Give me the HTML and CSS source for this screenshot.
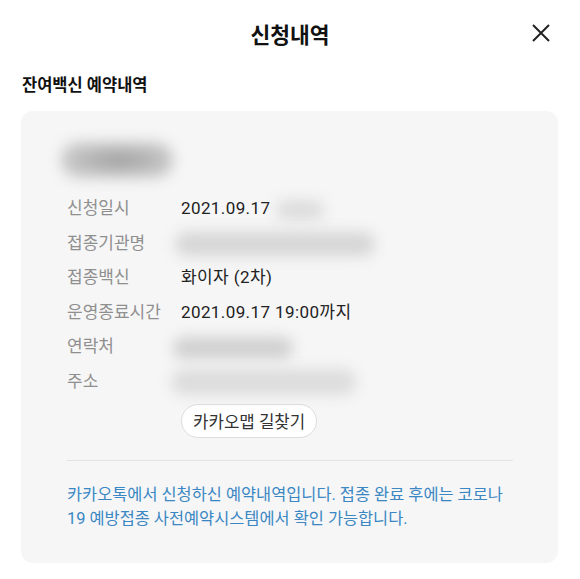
FILE: index.html
```html
<!doctype html>
<html lang="ko">
  <head>
    <meta charset="utf-8">
    <title>신청내역</title>
    <link rel="stylesheet" href="styles.css">
  </head>
  <body>
    <header class="topbar">
      <span></span>
      <h1 class="topbar-title">신청내역</h1>
      <button class="close-button" title="닫기">
        <svg width="20" height="20" viewBox="0 0 20 20">
          <path d="M2 2 L18 18 M18 2 L2 18" stroke="#222" stroke-width="2" fill="none"/>
        </svg>
      </button>
    </header>

    <h2 class="section-title">잔여백신 예약내역</h2>

    <section class="card">
      <div class="name"><span class="blur blur-name"></span></div>

      <dl class="details">
        <dt>신청일시</dt>
        <dd>2021.09.17<span class="blur blur-time"></span></dd>

        <dt>접종기관명</dt>
        <dd><span class="blur blur-org"></span></dd>

        <dt>접종백신</dt>
        <dd>화이자 (2차)</dd>

        <dt>운영종료시간</dt>
        <dd>2021.09.17 19:00까지</dd>

        <dt>연락처</dt>
        <dd><span class="blur blur-phone"></span></dd>

        <dt>주소</dt>
        <dd><span class="blur blur-addr"></span></dd>

        <dd class="map-link"><button class="pill-button">카카오맵 길찾기</button></dd>
      </dl>

      <hr class="divider">

      <p class="notice">카카오톡에서 신청하신 예약내역입니다. 접종 완료 후에는 코로나 19 예방접종 사전예약시스템에서 확인 가능합니다.</p>
    </section>
  </body>
</html>
```

FILE: styles.css
```css
* {
  box-sizing: border-box;
}

html, body {
  background: #fff;
  font-family: Roboto, 'Noto Sans CJK KR', sans-serif;
  color: #222;
  margin: 0;
}

.topbar {
  display: grid;
  grid-template-columns: 1fr auto 1fr;
  align-items: center;
  height: 66px;
}

.topbar-title {
  font-size: 21.5px;
  font-weight: bold;
  margin: 0;
  color: #111;
}

.close-button {
  justify-self: end;
  margin-right: 29px;
  padding: 0;
  border: 0;
  background: none;
  width: 20px;
  height: 20px;
}

.close-button svg {
  display: block;
}

.section-title {
  font-size: 16.5px;
  font-weight: bold;
  line-height: 24px;
  margin: 8px 22px 13px;
  color: #111;
}

.card {
  margin: 0 22px 0 21px;
  padding: 29px 45px 32px 46px;
  background: #f6f6f6;
  border-radius: 12px;
}

.name {
  height: 40px;
  margin-bottom: 11px;
}

.blur {
  display: inline-block;
  vertical-align: middle;
  background: #cfcfcf;
  border-radius: 20px;
  filter: blur(7px);
}

.blur-name {
  width: 112px;
  height: 36px;
  margin: 2px 0 0 -6px;
  background: radial-gradient(ellipse at 52% 50%, #a0a0a0, #c6c6c6 65%, #d4d4d4);
}

.blur-time {
  width: 48px;
  height: 20px;
  margin-left: 6px;
  background: #dcdcdc;
}

.blur-org {
  width: 200px;
  height: 24px;
  margin-left: -6px;
  background: #d6d6d6;
}

.blur-phone {
  width: 120px;
  height: 22px;
  margin-left: -8px;
  background: #d0d0d0;
}

.blur-addr {
  width: 185px;
  height: 26px;
  margin-left: -10px;
  background: #dcdcdc;
}

.details {
  display: grid;
  grid-template-columns: 114px 1fr;
  margin: 0;
  font-size: 17px;
  line-height: 34.6px;
}

.details dt {
  color: #8f8f8f;
  white-space: nowrap;
}

.details dd {
  margin: 0;
  white-space: nowrap;
  letter-spacing: 0.4px;
}

.map-link {
  grid-column: 2;
  padding-top: 5px;
  line-height: normal;
}

.pill-button {
  font-family: inherit;
  font-size: 16.8px;
  letter-spacing: 0;
  color: #333;
  background: #fff;
  border: 1px solid #ddd;
  border-radius: 17px;
  height: 34px;
  padding: 0 11px;
}

.divider {
  border: 0;
  border-top: 1px solid #e3e3e3;
  margin: 22px 0 22px;
}

.notice {
  margin: 0;
  font-size: 16.4px;
  line-height: 24px;
  color: #3a87c4;
}
```
